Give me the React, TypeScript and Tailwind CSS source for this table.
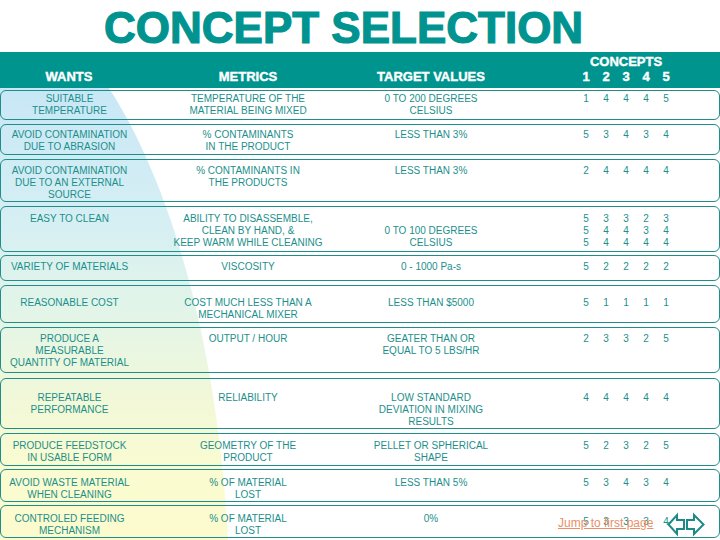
import React from "react";

type Row = {
  want: string[];
  metric: string[];
  target: string[];
  scores: number[][];
  rowCls: string;
  targetCls?: string;
  scoreCls?: string;
};

const rows: Row[] = [
  {
    want: ["SUITABLE", "TEMPERATURE"],
    metric: ["TEMPERATURE OF THE", "MATERIAL BEING MIXED"],
    target: ["0 TO 200 DEGREES", "CELSIUS"],
    scores: [[1, 4, 4, 4, 5]],
    rowCls: "mt-[2px] h-[30px] pt-[1.5px]",
  },
  {
    want: ["AVOID CONTAMINATION", "DUE TO ABRASION"],
    metric: ["% CONTAMINANTS", "IN THE PRODUCT"],
    target: ["LESS THAN 3%"],
    scores: [[5, 3, 4, 3, 4]],
    rowCls: "mt-[4px] h-[31px] pt-[3.5px]",
  },
  {
    want: ["AVOID CONTAMINATION", "DUE TO AN EXTERNAL", "SOURCE"],
    metric: ["% CONTAMINANTS IN", "THE PRODUCTS"],
    target: ["LESS THAN 3%"],
    scores: [[2, 4, 4, 4, 4]],
    rowCls: "mt-[4px] h-[43px] pt-[4.5px]",
  },
  {
    want: ["EASY TO CLEAN"],
    metric: ["ABILITY TO DISASSEMBLE,", "CLEAN BY HAND, &", "KEEP WARM WHILE CLEANING"],
    target: ["0 TO 100 DEGREES", "CELSIUS"],
    scores: [
      [5, 3, 3, 2, 3],
      [5, 4, 4, 3, 4],
      [5, 4, 4, 4, 4],
    ],
    rowCls: "mt-[4px] h-[46px] pt-[5.5px]",
    targetCls: "mt-[12px]",
  },
  {
    want: ["VARIETY OF MATERIALS"],
    metric: ["VISCOSITY"],
    target: ["0 - 1000 Pa-s"],
    scores: [[5, 2, 2, 2, 2]],
    rowCls: "mt-[3px] h-[26px] pt-[4.5px]",
  },
  {
    want: ["REASONABLE COST"],
    metric: ["COST MUCH LESS THAN A", "MECHANICAL MIXER"],
    target: ["LESS THAN $5000"],
    scores: [[5, 1, 1, 1, 1]],
    rowCls: "mt-[4px] h-[38px] pt-[10.5px]",
  },
  {
    want: ["PRODUCE A", "MEASURABLE", "QUANTITY OF MATERIAL"],
    metric: ["OUTPUT / HOUR"],
    target: ["GEATER THAN OR", "EQUAL TO 5 LBS/HR"],
    scores: [[2, 3, 3, 2, 5]],
    rowCls: "mt-[4px] h-[46px] pt-[4.5px]",
  },
  {
    want: ["REPEATABLE", "PERFORMANCE"],
    metric: ["RELIABILITY"],
    target: ["LOW STANDARD", "DEVIATION IN MIXING", "RESULTS"],
    scores: [[4, 4, 4, 4, 4]],
    rowCls: "mt-[5px] h-[51px] pt-[13px]",
  },
  {
    want: ["PRODUCE FEEDSTOCK", "IN USABLE FORM"],
    metric: ["GEOMETRY OF THE", "PRODUCT"],
    target: ["PELLET OR SPHERICAL", "SHAPE"],
    scores: [[5, 2, 3, 2, 5]],
    rowCls: "mt-[4px] h-[33px] pt-[5.5px]",
  },
  {
    want: ["AVOID WASTE MATERIAL", "WHEN CLEANING"],
    metric: ["% OF MATERIAL", "LOST"],
    target: ["LESS THAN 5%"],
    scores: [[5, 3, 4, 3, 4]],
    rowCls: "mt-[3px] h-[33px] pt-[6.5px]",
  },
  {
    want: ["CONTROLED FEEDING", "MECHANISM"],
    metric: ["% OF MATERIAL", "LOST"],
    target: ["0%"],
    scores: [[5, 3, 3, 3, 4]],
    rowCls: "mt-[3px] h-[33px] pt-[6.5px]",
    scoreCls: "mt-[3px]",
  },
];

function Lines({ lines, className = "" }: { lines: string[]; className?: string }) {
  return (
    <div className={`text-center ${className}`}>
      {lines.map((l, i) => (
        <div key={i} className="whitespace-nowrap">
          {l}
        </div>
      ))}
    </div>
  );
}

function Scores({ values }: { values: number[] }) {
  return (
    <div className="flex">
      {values.map((v, i) => (
        <span key={i} className="w-[20px] text-center">
          {v}
        </span>
      ))}
    </div>
  );
}

export default function App() {
  return (
    <div className="relative w-[720px] h-[540px] overflow-hidden bg-white font-['Liberation_Sans',Arial,sans-serif]">
      {/* left background swoosh */}
      <svg className="absolute left-0 top-0 w-[260px] h-[540px]" viewBox="0 0 260 540">
        <defs>
          <linearGradient id="swoosh" x1="0" y1="88" x2="0" y2="540" gradientUnits="userSpaceOnUse">
            <stop offset="0" stopColor="#c8e7f6" />
            <stop offset="0.3" stopColor="#d6eff3" />
            <stop offset="0.5" stopColor="#e3f5e8" />
            <stop offset="0.68" stopColor="#f1f8d9" />
            <stop offset="0.85" stopColor="#fafbd0" />
            <stop offset="1" stopColor="#fbfbce" />
          </linearGradient>
        </defs>
        <path d="M0 52 L82 52 C150 130 215 300 228 540 L0 540 Z" fill="url(#swoosh)" />
      </svg>

      <div className="relative">
        {/* title */}
        <div className="h-[52px] pt-[6px] pl-[104px]">
          <h1 className="text-[44px] leading-[44px] font-bold text-[#00938f] whitespace-nowrap [-webkit-text-stroke:1.2px_#00938f]">
            CONCEPT SELECTION
          </h1>
        </div>

        {/* header band */}
        <div className="h-[36px] bg-[#00948f] pt-[2px] grid grid-cols-[138px_220px_146px_72px_100px] text-[13px] leading-[15px] font-bold text-white [-webkit-text-stroke:0.4px_#ffffff]">
          <div className="mt-[15px] text-center">WANTS</div>
          <div className="mt-[15px] text-center">METRICS</div>
          <div className="mt-[15px] text-center">TARGET VALUES</div>
          <div />
          <div>
            <div className="text-center">CONCEPTS</div>
            <div className="flex">
              {[1, 2, 3, 4, 5].map((n) => (
                <span key={n} className="w-[20px] text-center">
                  {n}
                </span>
              ))}
            </div>
          </div>
        </div>

        {/* rows */}
        {rows.map((r, i) => (
          <div
            key={i}
            className={`grid grid-cols-[137px_220px_146px_72px_100px] border-[1.5px] border-[#1f8d89] rounded-[6px] text-[10px] leading-[12px] text-[#1c8f8b] ${r.rowCls}`}
          >
            <Lines lines={r.want} />
            <Lines lines={r.metric} />
            <Lines lines={r.target} className={r.targetCls ?? ""} />
            <div />
            <div className={r.scoreCls ?? ""}>
              {r.scores.map((s, j) => (
                <Scores key={j} values={s} />
              ))}
            </div>
          </div>
        ))}
      </div>

      {/* footer navigation */}
      <a href="#" className="absolute left-[558px] top-[516px] text-[12px] leading-[14px] text-[#ea8f66] underline">
        Jump to first page
      </a>
      <svg className="absolute left-[667px] top-[512px] w-[40px] h-[26px]" viewBox="0 0 40 26">
        <polygon
          points="1.5,12.5 10,3 10,8 17,8 17,17 10,17 10,22"
          fill="white"
          stroke="#1d8a86"
          strokeWidth="2"
          strokeLinejoin="miter"
        />
        <polygon
          points="20,8 27,8 27,3 36.5,12.5 27,22 27,17 20,17"
          fill="white"
          stroke="#1d8a86"
          strokeWidth="2"
          strokeLinejoin="miter"
        />
      </svg>
    </div>
  );
}
